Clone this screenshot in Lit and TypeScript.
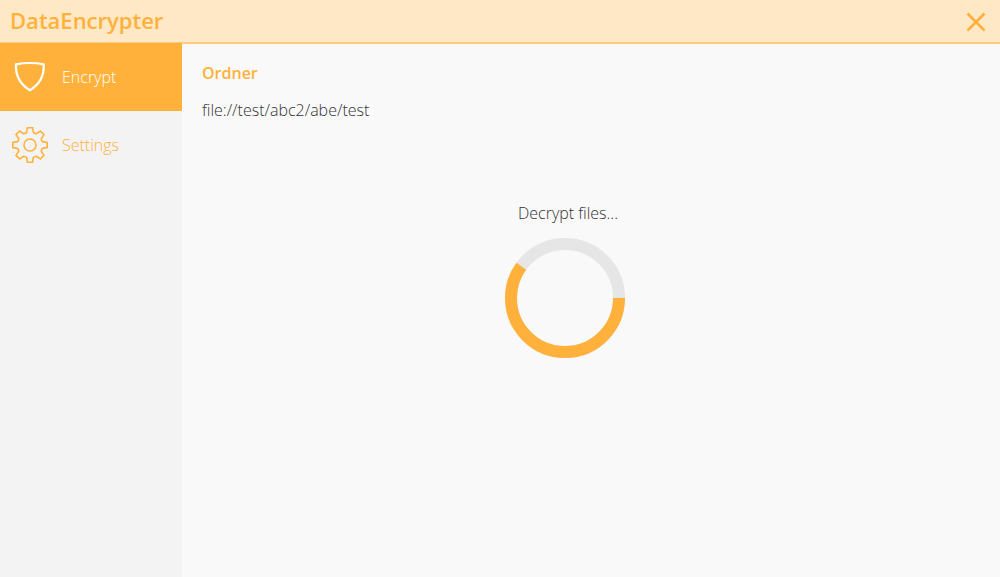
import { LitElement, html, css, svg } from "lit";
import { customElement, property, state } from "lit/decorators.js";
import { classMap } from "lit/directives/class-map.js";

function gearPath(cx: number, cy: number): string {
  const root = 13;
  const tip = 17.4;
  const rootHalf = 15;
  const tipHalf = 8.5;
  const at = (r: number, deg: number) => {
    const a = (deg * Math.PI) / 180;
    return `${(cx + r * Math.cos(a)).toFixed(2)} ${(cy + r * Math.sin(a)).toFixed(2)}`;
  };
  let d = "";
  for (let i = 0; i < 8; i++) {
    const a = i * 45;
    d += `${i ? "L" : "M"}${at(root, a - rootHalf)}L${at(tip, a - tipHalf)}L${at(tip, a + tipHalf)}L${at(root, a + rootHalf)}`;
    d += `Q${at(root - 0.8, a + 22.5)} ${at(root, a + 45 - rootHalf)}`;
  }
  return d + "Z";
}

const icons = {
  shield: svg`<path d="M16 5.3Q29.9 2.7 43.7 5.3C44.3 16.6 39.4 25.6 29.9 31.2C20.4 25.6 15.4 16.6 16 5.3Z" stroke-width="2.2" />`,
  gear: svg`<path d=${gearPath(30, 18)} stroke-width="1.6" /><circle cx="30" cy="18" r="6" stroke-width="1.6" />`,
};

@customElement("progress-ring")
class ProgressRing extends LitElement {
  @property({ type: Number }) value = 0;

  static styles = css`
    :host { display: block; width: 120px; height: 120px; }
    svg { display: block; width: 100%; height: 100%; }
    .track, .bar { fill: none; stroke-width: 12; }
    .track { stroke: #e6e6e6; }
    .bar { stroke: #ffb13b; }
  `;

  render() {
    return html`<svg viewBox="0 0 120 120" role="progressbar" aria-label="Decrypt files" aria-valuenow=${this.value}>
      <circle class="track" cx="60" cy="60" r="54" />
      <circle class="bar" cx="60" cy="60" r="54" pathLength="100" stroke-dasharray="${this.value} 100" />
    </svg>`;
  }
}

@customElement("app-root")
class AppRoot extends LitElement {
  @state() private page = "Encrypt";

  private items = [
    { label: "Encrypt", icon: icons.shield },
    { label: "Settings", icon: icons.gear },
  ];

  static styles = css`
    :host {
      display: flex;
      flex-direction: column;
      min-height: 100vh;
      background: #f9f9f9;
      color: #333;
      font: 300 16px/24px "Open Sans", sans-serif;
    }
    .header {
      display: flex;
      align-items: center;
      justify-content: space-between;
      height: 42px;
      padding: 0 10px;
      background: #ffe8c5;
      border-bottom: 2px solid #ffcb7c;
    }
    .title { margin: 0; padding-bottom: 2px; font-size: 22px; line-height: 30px; font-weight: 600; color: #ffb13b; }
    button { font: inherit; border: 0; background: none; cursor: pointer; }
    .close { display: block; padding: 0; width: 28px; height: 28px; color: #ffb13b; }
    .close svg { display: block; }
    .body { display: flex; flex: 1; }
    .nav { width: 182px; flex: none; background: #f3f3f3; margin-top: -1px; }
    .item {
      display: flex;
      align-items: center;
      gap: 14px;
      width: 100%;
      height: 68px;
      padding: 0 12px;
      color: #ffb13b;
      text-align: left;
    }
    .item.active { background: #ffb13b; color: #fff; }
    .icon { display: block; fill: none; stroke: currentColor; }
    .main { flex: 1; padding: 17px 20px; }
    .heading { margin: 0; font-size: 16px; line-height: 24px; font-weight: 600; color: #ffb13b; }
    .path { margin: 13px 0 0; }
    .status { width: 126px; margin: 79px auto 0; padding-right: 46px; }
    .message { margin: 0 0 13px; text-align: center; }
  `;

  render() {
    return html`
      <header class="header">
        <h1 class="title">DataEncrypter</h1>
        <button class="close" aria-label="Close">
          <svg width="28" height="28" viewBox="0 0 28 28" fill="none" stroke="currentColor" stroke-width="2.6">
            <path d="M5.5 6.5L22.5 23.5M22.5 6.5L5.5 23.5" />
          </svg>
        </button>
      </header>
      <div class="body">
        <nav class="nav">
          ${this.items.map(
            (item) => html`<button
              class=${classMap({ item: true, active: item.label === this.page })}
              @click=${() => (this.page = item.label)}
            >
              <svg class="icon" width="36" height="36" viewBox="12 0 36 36" aria-hidden="true">${item.icon}</svg>
              <span>${item.label}</span>
            </button>`
          )}
        </nav>
        <main class="main">
          <h2 class="heading">Ordner</h2>
          <p class="path">file://test/abc2/abe/test</p>
          <section class="status">
            <p class="message">Decrypt files...</p>
            <progress-ring value="60"></progress-ring>
          </section>
        </main>
      </div>
    `;
  }
}
